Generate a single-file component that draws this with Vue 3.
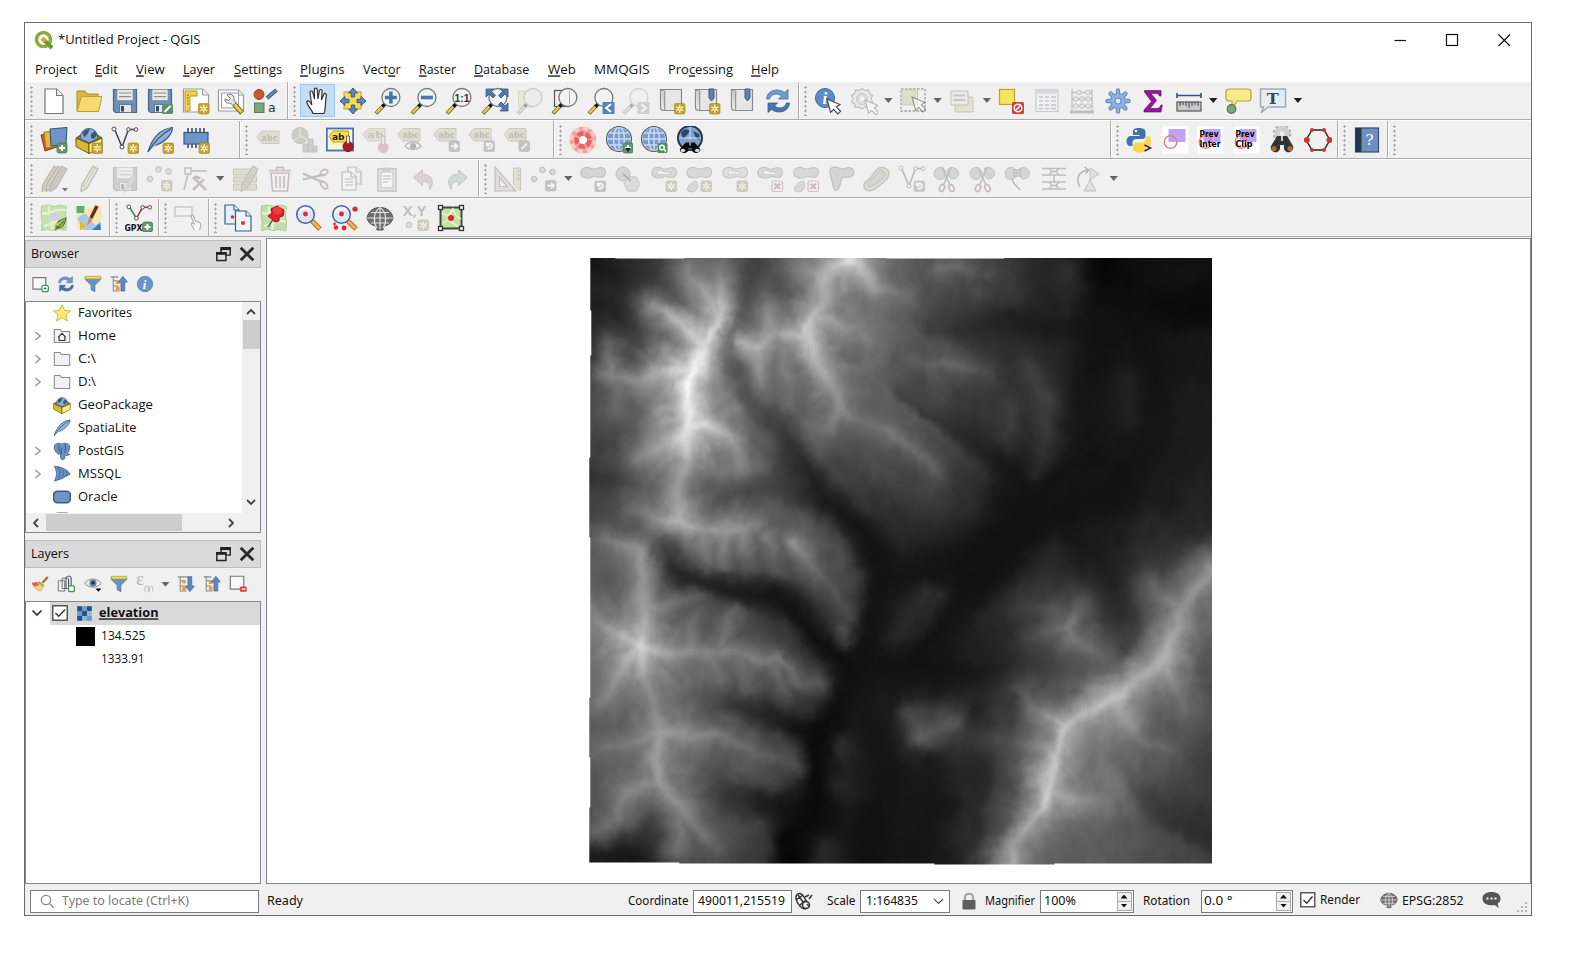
<script setup>
import { h, onMounted, ref } from 'vue'

/* Text run fitted to a fixed advance width. A "_" marks the mnemonic letter. */
const Txt = (p) => {
  const parts = p.t.split(/_(.)/)
  return h('svg', { width: p.w, height: 20, style: { display: 'block', overflow: 'visible', flex: 'none' } }, [
    h('text', {
      x: 0, y: 14.4, textLength: p.w, lengthAdjust: 'spacingAndGlyphs',
      'font-family': p.f || '"Open Sans", "Noto Sans", sans-serif', 'font-size': p.s || 13.2,
      'font-weight': p.b ? 700 : 400, fill: p.c || '#111', 'text-decoration': p.u ? 'underline' : null
    }, parts.map((s, i) => (i % 2 ? h('tspan', { 'text-decoration': 'underline' }, s) : s)))
  ])
}
Txt.props = ['t', 'w', 's', 'b', 'c', 'u', 'f']

const tahoma = '"Noto Sans", "Open Sans", sans-serif'

const menus = [
  ['Project', 42], ['_Edit', 22.7], ['_View', 28.7], ['_Layer', 32], ['_Settings', 48.2], ['_Plugins', 44.7],
  ['Vect_or', 37.5], ['_Raster', 37], ['_Database', 55.2], ['_Web', 27.8], ['MMQGIS', 55.5], ['Pro_cessing', 65], ['_Help', 28]
]

/* ---------- icon parts ---------- */
const star = (x = 16.5, y = 16.5) => `<rect x="${x}" y="${y}" width="10.5" height="10.5" rx="1.5" fill="#c4a12a" stroke="#a58418" stroke-width=".6"/><g transform="translate(${x + 5.25} ${y + 5.25})"><path d="M0-4V4M-3.6-2L3.6 2M-3.6 2L3.6-2" stroke="#fff8d8" stroke-width="1.4"/><circle r="1.3" fill="#c4a12a" stroke="#fff8d8"/></g>`
const plus = (x = 17, y = 17) => `<rect x="${x}" y="${y}" width="10" height="10" rx="2" fill="#5f9a68" stroke="#3f7048" stroke-width=".7"/><path d="M${x + 5} ${y + 2}v6M${x + 2} ${y + 5}h6" stroke="#fff" stroke-width="2"/>`
const grey = (x, y, g) => `<rect x="${x}" y="${y}" width="10.5" height="10.5" rx="1.5" fill="#8f9a9a" stroke="#7d8585" stroke-width=".6"/><path d="${g}" transform="translate(${x} ${y})" fill="none" stroke="#fff" stroke-width="1.7"/>`
const arrowG = 'M2 5.2h6M5.4 2.4l3 2.8-3 2.8'
const turnG = 'M3 3.4c4-2.6 6 1 4.2 3.2-1 1.2-2.6 1.2-3.6.4M2.6 1.6l.2 3h3'
const lens = (inner, handle = '#f0c63a', rim = '#73787a', fill = '#f1f2f2') => `<path d="M2 26.5l8.5-9" stroke="#55575a" stroke-width="4"/><path d="M2.4 25.900l6-6.300" stroke="${handle}" stroke-width="2.500"/><path d="M8.500 19.600l3-3.200" stroke="#111" stroke-width="3"/><circle cx="16.900" cy="10.500" r="9" fill="${fill}" stroke="${rim}" stroke-width="1.300"/>${inner}`
const sheet = (x, y, w, hh, c = 6, f = '#fff', s = '#8a8a8a') => `<path d="M${x} ${y}h${w - c}l${c} ${c}v${hh - c}h${-w}z" fill="${f}" stroke="${s}" stroke-width="1.2"/><path d="M${x + w - c} ${y}v${c}h${c}" fill="#eee" stroke="${s}" stroke-width="1.1"/>`
const floppy = `<path d="M2.5 2.5h23v23h-21l-2-2z" fill="#6d8fb8" stroke="#4d6580" stroke-width="1.2"/><rect x="6" y="2.5" width="16" height="11" fill="#e8e8e4" stroke="#8a9094" stroke-width=".7"/><path d="M8 6h12M8 9.6h12" stroke="#8c8c88" stroke-width="1.2"/><rect x="8.5" y="17.5" width="12" height="8" fill="#e6e6e6" stroke="#566a80" stroke-width=".8"/><rect x="10" y="19" width="3" height="5.5" fill="#34486a"/>`
const pencil = (t, f = '#cfc68a') => `<g transform="${t}"><path d="M18 1l5 3-11 19-6 3.4.8-6.8z" fill="${f}" stroke="#87826a" stroke-width="1.1"/><path d="M20.4 2.6L9.4 21M6.8 19.6l5 3" stroke="#a09a78" stroke-width="1" fill="none"/></g>`
const tag = (t, f = '#cfcbb0', s = '#a9a68e', c = '#8b8b80') => `<path d="M1 8.5l5-6h17v12.500H6z" fill="${f}" stroke="${s}" stroke-width="1"/><text x="5.6" y="12.2" font-family="DejaVu Sans, sans-serif" font-weight="700" font-size="9" textLength="16" lengthAdjust="spacingAndGlyphs" fill="${c}">${t}</text>`
const blob = (f = '#b9beb9') => `<path d="M2 9C1 3 7 1 12 3.400s8-2.400 12-.4 3 9-2 9.400c-4 .4-6-2-8-.5S3.400 14 2 9z" fill="${f}" stroke="#8e948e" stroke-width="1.1"/>`
const hole = `<path d="M7 8c0-3 4-3.400 6-1.600s5-1 6.500 1-2 2.800-5 2.200S7 11 7 8z" fill="#f0f0f0" stroke="#8e948e" stroke-width=".9"/>`
const globe = (f, s, x = 14, y = 13, r = 12) => `<g transform="translate(${x} ${y})"><circle r="${r}" fill="${f}" stroke="${s}" stroke-width="1.3"/><ellipse rx="${r * .45}" ry="${r}" fill="none" stroke="${s}" stroke-width="1.500"/><path d="M0 ${-r}V${r}M${-r} 0H${r}M${-r * .87} ${-r * .5}H${r * .87}M${-r * .87} ${r * .5}H${r * .87}" stroke="${s}" stroke-width="1.400"/><circle r="${r + .5}" fill="none" stroke="#555b66" stroke-width="1.100"/></g>`
const vnode = (c = '#3c4650') => `<path d="M3.500 3l7.500 18L17.500 3.500h7" fill="none" stroke="${c}" stroke-width="1.500"/><g fill="#fff" stroke="${c}"><circle cx="3" cy="3" r="2"/><circle cx="17.500" cy="3.500" r="1.800"/><circle cx="25" cy="3.500" r="1.800"/><circle cx="11" cy="21" r="2"/></g>`
const scissor = `<path d="M9 2l7.500 17M18 2l-7 17" stroke="#8a9090" stroke-width="1.600"/><ellipse cx="9" cy="23" rx="2.400" ry="3.600" transform="rotate(24 9 23)" fill="none" stroke="#a08888" stroke-width="1.700"/><ellipse cx="18.500" cy="23" rx="2.400" ry="3.600" transform="rotate(-24 18.500 23)" fill="none" stroke="#a08888" stroke-width="1.700"/>`
const twoBlob = `<circle cx="7" cy="8.500" r="6" fill="#b9beb9" stroke="#8e948e"/><path d="M15 4c4-3 10-1 10.500 4s-6 8-9 4-3-6-1.500-8z" fill="#b9beb9" stroke="#8e948e"/>`
const cur = (x, y) => `<path transform="translate(${x} ${y})" d="M0 0l3.600 13.500 3-3.200 4.200 4.600 2.800-2.600-4.300-4.400 3.700-2.400z" fill="#fff" stroke="#444" stroke-width="1.100"/>`
const scroll = `<path d="M2.500 2.500h21v21h-17.500c-3 0-3.500-1-3.500-3z" fill="#e6e6e6" stroke="#8a8a8a" stroke-width="1.200"/><path d="M2.500 4c3.500-2.500 5 0 4.200 3v16" fill="#d0d0d0" stroke="#8a8a8a"/>`
const mark = `<path d="M16 2h5v9l-2.500 3-2.500-3z" fill="#5d83b4" stroke="#3a5a85" stroke-width="1"/>`
const refresh = `<path d="M2.500 12C3 3 14 .5 20.500 5.500L24 2.500V12H14.500l3-3C13 5.500 7 7 5.500 12z" fill="#6c9bd2" stroke="#416da6" stroke-width=".8"/><path d="M25.500 16C25 25 14 27.500 7.500 22.500L4 25.500V16h9.500l-3 3c4.500 3.500 10.500 2 12-3z" fill="#4574b0" stroke="#345f92" stroke-width=".8"/>`
const prev = (b) => `<rect x=".5" y=".5" width="26" height="27" fill="#fff"/><rect x="6.500" y="3" width="17" height="13" fill="#bca2f8"/><circle cx="8.500" cy="16" r="6.300" fill="none" stroke="#f07b7b" stroke-width="1.500"/>${b ? `<text x="2.500" y="10.500" font-family="DejaVu Sans, sans-serif" font-size="9.500" font-weight="700" textLength="19" lengthAdjust="spacingAndGlyphs">Prev</text><text x="2.500" y="21" font-family="DejaVu Sans, sans-serif" font-size="9.500" font-weight="700" textLength="${b === 'Inter' ? 21 : 17}" lengthAdjust="spacingAndGlyphs">${b}</text>` : ''}`
const bino = (c = '#333', e = '#b06a28') => `<path d="M9 10h4v5h2v-5h4l6 10a4.500 4.500 0 1 1-9 3v-4h-4v4a4.500 4.500 0 1 1-9-3z" fill="${c}"/><circle cx="6" cy="22.500" r="2.600" fill="${e}"/><circle cx="22" cy="22.500" r="2.600" fill="${e}"/>`
const box = `<path d="M1 12l13 5.500v10l-13-7z" fill="#d9b92e" stroke="#6b5a1a"/><path d="M14 17.500l13-5.500v9l-13 6.500z" fill="#f9ea7c" stroke="#6b5a1a"/><path d="M1 12l6-4h14l6 4-13 5.500z" fill="#8a7428" stroke="#6b5a1a"/><path d="M5.500 13A8.700 8.700 0 1 1 22.500 13L14 16.500z" fill="#8daad0" stroke="#4a6080"/><path d="M7.500 7c2-3 5-4.500 7-3.500l-1.500 4-4 4zM16 8l4-3 2 4-3 4-3-1z" fill="#3a587c"/>`
const quill = (c = '#8fb2dc') => `<path d="M2 26C6 12 14 3 26.500 1.500c0 5-4.500 13-17 18" fill="${c}" stroke="#3c5a80" stroke-width="1.200"/><path d="M2 26C8 16 14 9 25 3" fill="none" stroke="#34506f" stroke-width="1.100"/>`
const eye = (x, y) => `<g transform="translate(${x} ${y})"><path d="M-8 0c4-5.500 12-5.500 16 0-4 4.500-12 4.500-16 0z" fill="#eee" stroke="#777" stroke-width="1.200"/><circle r="3" fill="#777"/></g>`
const thermo = (c) => `<path d="M19.500 10h3.500v7a5 5 0 1 1-3.500 0z" fill="${c}" stroke="${c}"/><path d="M20 11h2v7h-2z" fill="#fff" opacity=".7"/>`
const map = `<path d="M1.500 2l6-1 7 1.500 6-1.500 6 1.500-1 8 1 8-.5 8-6.500-1-6 1-6-1-6 1 .5-9-1-8z" fill="#bfe0a8" stroke="#9cc48a" stroke-width=".8"/><path d="M2 9c8 3 10-5 24-3M9 2c-2 9 6 14 3 24M26 18c-8-3-10 1-22 4" stroke="#e9f2cf" stroke-width="2.200" fill="none"/>`
const mg = (x) => `<path d="M17 17l8 8" stroke="#b8741e" stroke-width="5"/><path d="M17 17l7.500 7.500" stroke="#f2b45a" stroke-width="2.600"/><circle cx="10.500" cy="10.500" r="8.800" fill="#d8e8fb" stroke="#4a5fa0" stroke-width="1.500"/><path d="M4.500 9c1-5 7-6 10-3" stroke="#fff" stroke-width="1.600" fill="none"/><circle cx="10.500" cy="10" r="2.400" fill="#e22"/>${x}`
const dn = (x, y) => `<path d="M${x} ${y}h6l-3 4z" fill="#222"/>`

const I = {
  newdoc: sheet(5, 2, 18, 24.5, 6.5, '#fff', '#777'),
  open: `<path d="M2 23.500V4h8l2 3h11v4" fill="#d9b840" stroke="#b18f25" stroke-width="1"/><path d="M2 24.500l4.500-15H27l-3.500 15z" fill="#f6d970" stroke="#c19f33" stroke-width="1"/>`,
  save: floppy,
  saveas: floppy + `<rect x="16" y="17" width="11" height="10" rx="1.500" fill="#5b9167"/><path d="M18.500 25l6-6" stroke="#fff" stroke-width="2.200"/>`,
  layout: sheet(1.500, 2, 25, 23, 6, '#fff', '#999') + `<path d="M3 4h12v5H8v15H3z" fill="#f3d24e" stroke="#b8962c"/><path d="M5 8h2M5 11h2M5 14h2M5 17h2" stroke="#907010"/>` + star(),
  layouts: sheet(1.500, 3, 25, 21, 5, '#fff', '#999') + `<path d="M4.500 6h17v15h-17z" fill="#fafafa" stroke="#99b"/><path d="M17 17l8 9" stroke="#7a6420" stroke-width="5"/><path d="M17 17l7.500 8.300" stroke="#f0cf4a" stroke-width="3"/><path d="M10 8c4-2.500 8 1 7 5l2 3-3 2.500-2.500-2.500c-3 1-6-1-5.500-4l3.500 1.500 2-2z" fill="#e6e6e6" stroke="#777"/>`,
  style: `<circle cx="7" cy="7.500" r="5" fill="#c65a2e" stroke="#9d4420"/><path d="M15 11l9.500-8" stroke="#35557d" stroke-width="4"/><path d="M15 11l9.500-8" stroke="#6a90c2" stroke-width="2"/><rect x="2.500" y="16" width="9.500" height="9.500" fill="#7ba677" stroke="#54804f"/><text x="16" y="25" font-family="DejaVu Sans, sans-serif" font-size="12.500" fill="#333">a</text>`,
  hand: `<path d="M10 26.500c-1-4-4.500-6-6-10.500-.8-2.500 1.800-3 3-.8L8.800 18 7 6c-.3-2.500 2.400-2.700 2.900-.4L11.500 12 11.300 3c0-2.400 2.700-2.400 3 0l.7 9 1.300-8c.4-2.200 2.900-1.800 2.800.4L18.500 13l2.200-5.500c.9-1.800 3-1 2.700 1C22 15 23 22 21 26.500z" fill="#fff" stroke="#333" stroke-width="1.200"/>`,
  pan: `<rect x="5" y="5" width="17" height="17" fill="#f5dc52" stroke="#c0a32c"/><path d="M14 1l4.500 5h-2.800v4h-3.400V6H9.500zM14 27l4.500-5h-2.800v-4h-3.400v4H9.500zM1 14l5-4.500v2.800h4v3.400H6v2.800zM27 14l-5-4.500v2.800h-4v3.400h4v2.800z" fill="#5c87bd" stroke="#35557d" stroke-width=".9"/>`,
  zin: lens('<path d="M16.900 4.500v12M10.900 10.500h12" stroke="#4775ae" stroke-width="3.600"/>'),
  zout: lens('<path d="M10.900 10.500h12" stroke="#4775ae" stroke-width="3.600"/>'),
  z11: lens('<text x="9.500" y="14.700" font-family="Liberation Sans, sans-serif" font-weight="700" font-size="11" textLength="15" lengthAdjust="spacingAndGlyphs" fill="#333">1:1</text>'),
  full: lens('<path d="M5 2h8l-2.500 2.500 4 4-2.500 2.500-4-4L5 10zM27 2h-8l2.500 2.500-4 4 2.500 2.500 4-4L27 10zM27 24h-8l2.500-2.500-4-4 2.500-2.500 4 4L27 16z" fill="#4f7ab0" stroke="#35557d" stroke-width=".8"/>'),
  zsel: `<g opacity=".35"><rect x="2.500" y="4" width="16" height="16" fill="#e0dc9a" stroke="#aaa"/>${lens('', '#bbb', '#888', '#e6e6dc')}</g>`,
  zlay: `<rect x="3.500" y="3.500" width="15" height="16" fill="#eee" stroke="#555" stroke-width="1.200"/>` + lens('<path d="M18.500 4v13" stroke="#aaa"/>'),
  zlast: lens('') + `<rect x="15.500" y="15" width="12" height="12" fill="#5583bc"/><path d="M24 17l-4.800 4 4.800 4" fill="none" stroke="#fff" stroke-width="2"/>`,
  znext: `<g opacity=".3">${lens('', '#bbb', '#888')}<rect x="15.500" y="15" width="12" height="12" fill="#888"/><path d="M19 17l4.800 4-4.800 4" fill="none" stroke="#fff" stroke-width="2"/></g>`,
  nview: scroll + star(),
  n3d: scroll + mark + star(),
  book: scroll + mark,
  refresh,
  ident: `<circle cx="11" cy="11" r="9.500" fill="#5f8cc6" stroke="#3b659e"/><text x="8.500" y="17" font-family="Liberation Serif, serif" font-style="italic" font-weight="700" font-size="17" fill="#fff">i</text>` + cur(13, 12),
  action: `<g opacity=".35"><path d="M12 1.500l3 2 3.500-.5 1 3.500 3 2-1.500 3.500 1.500 3-3 2-1 3.500-3.500-.5-3 2-3-2-3.500.5-1-3.500-3-2 1.500-3-1.500-3.500 3-2 1-3.500 3.500.5z" fill="#ddd" stroke="#666" stroke-width="1.200"/><circle cx="12" cy="12" r="5.500" fill="#bbb" stroke="#777"/><path d="M10.500 9l5 3-5 3z" fill="#fff"/>${cur(15, 13)}</g>`,
  select: `<g opacity=".5"><rect x="2" y="2" width="24" height="22" fill="none" stroke="#555" stroke-width="1.300" stroke-dasharray="2.500 1.500"/><rect x="3" y="3" width="15.500" height="15" fill="#cfcbae" stroke="#aaa88e"/></g><g opacity=".5">${cur(13, 10)}</g>`,
  form: `<g opacity=".45"><path d="M7 10h18v15H7z" fill="#d2cdac" stroke="#999578"/><path d="M3 4h17v14H3z" fill="#e4e4e2" stroke="#888"/><path d="M5.500 8.500h12M5.500 13h12" stroke="#999" stroke-width="1.800"/></g>`,
  desel: `<rect x="2.500" y="2.500" width="15" height="15" fill="#f7e35c" stroke="#bfa22c" stroke-width="1.200"/><rect x="15" y="15" width="12" height="12" rx="1.500" fill="#d43c3c"/><circle cx="21" cy="21" r="3.800" fill="none" stroke="#fff" stroke-width="1.500"/><path d="M18.500 23.500l5-5" stroke="#fff" stroke-width="1.500"/>`,
  table: `<g opacity=".3"><rect x="3" y="2.500" width="22" height="22" fill="#f3f3f3" stroke="#778" stroke-width="1.200"/><path d="M3 4.500h22" stroke="#9ab" stroke-width="4"/><path d="M6 10h4M12 10h4M18 10h5M6 14h4M12 14h4M18 14h5M6 18h4M12 18h4M18 18h5M6 21.500h4M12 21.500h4M18 21.500h5" stroke="#667" stroke-width="1.300"/></g>`,
  abacus: `<g opacity=".4" fill="none" stroke="#777"><path d="M4 2v22M24 2v22M4 5.500h20M4 12h20M4 19h20" stroke-width="1.300"/><path d="M2 25h24" stroke-width="3"/><g fill="#ddd"><circle cx="11" cy="5.500" r="2.300"/><circle cx="20" cy="5.500" r="2.300"/><circle cx="8" cy="12" r="2.300"/><circle cx="14" cy="12" r="2.300"/><circle cx="20" cy="12" r="2.300"/><circle cx="8" cy="19" r="2.300"/><circle cx="14" cy="19" r="2.300"/><circle cx="20" cy="19" r="2.300"/></g></g>`,
  gear: `<g stroke="#5d8ac6" stroke-width="4.400" stroke-linecap="round"><path d="M14 3.500v21M3.500 14h21M6.600 6.600l14.800 14.800M6.600 21.400L21.400 6.600"/></g><circle cx="14" cy="14" r="7.600" fill="#8fb0de" stroke="#5d8ac6"/><g stroke="#8fb0de" stroke-width="2.400" stroke-linecap="round"><path d="M14 3.500v5M14 19.500v5M3.500 14h5M19.500 14h5M6.600 6.600l3 3M18.400 18.400l3 3M6.600 21.400l3-3M18.400 9.600l3-3"/></g><circle cx="14" cy="14" r="3" fill="#dfe8f5" stroke="#5d8ac6"/>`,
  sigma: `<path d="M5.500 3.500h16.500v5.500h-1.500c-.6-2-1.500-2.500-4-2.500H12l5.500 7L11 21.500h6.500c2.500 0 3.500-1 4.500-3.500h1.300L22 25H5v-2l7.500-8.500L5.500 5z" fill="#93189b" stroke="#6c0f74" stroke-width=".7"/>`,
  ruler: `<path d="M2 8.500h24M2 6v5M26 6v5" stroke="#35587c" stroke-width="1.700"/><rect x="2" y="15" width="24" height="9" fill="#c8cacb" stroke="#555" stroke-width="1.200"/><path d="M5 15v4M8 15v3M11 15v4M14 15v6M17 15v4M20 15v3M23 15v4" stroke="#444"/>`,
  tip: `<path d="M5 2h19q3 0 3 3v6q0 3-3 3H13l-5 8v-8H5q-3 0-3-3V5q0-3 3-3z" fill="#f8eb87" stroke="#b9a040" stroke-width="1.200"/><circle cx="7.500" cy="22" r="4.300" fill="#7fa477" stroke="#4c7746" stroke-width="1.200"/>`,
  annot: `<path d="M1.500 2h25v18H9l-7 6 2.500-6h-3z" fill="#e5eef5" stroke="#a3aab0" stroke-width="1.500"/><text x="7.800" y="16.500" font-family="DejaVu Serif, serif" font-weight="700" font-size="15" textLength="12" lengthAdjust="spacingAndGlyphs" fill="#444">T</text>`,
  ds: `<path d="M1 9l12-3 4 15-12 4z" fill="#cf5b28" stroke="#8f3b16"/><path d="M4 6l13-1 2 15-13 2z" fill="#e8b63a" stroke="#a67d1c"/><path d="M10 3l17-1.500-1 16.500-15 2z" fill="#6e95c6" stroke="#34506f"/>` + plus(),
  gpkg: box + star(17, 17), vnew: vnode() + star(17, 17), spat: quill() + star(17, 17),
  mem: `<path d="M6 2v20M10 2v20M14 2v20M18 2v20M22 2v20" stroke="#34506f" stroke-width="1.600"/><rect x="2" y="6.500" width="24" height="11.500" fill="#6e95c6" stroke="#3c5a80" stroke-width="1.200"/>` + star(17, 17),
  abc: `<g opacity=".5" transform="translate(1 2.500)">${tag('abc')}</g>`,
  pie: `<g opacity=".5"><circle cx="9" cy="9.500" r="8" fill="#a9aa96" stroke="#8e948e"/><path d="M9 1.500v8l7 4M9 9.500L3 15" stroke="#eee" fill="none"/><path d="M12 18h5v8h-5zM17 13h5v13h-5zM22 20h4v6h-4z" fill="#b5aaaa" stroke="#999"/></g>`,
  abs: `<rect x=".8" y="2.500" width="26.400" height="22" fill="#fdf6cf" stroke="#3c73c8" stroke-width="1.800"/><path d="M3 10.500l4-5.500h15.500v11H7z" fill="#f8e04c" stroke="#b59b28"/><text x="6" y="14" font-family="DejaVu Sans, sans-serif" font-weight="700" font-size="9" fill="#222">ab</text><circle cx="22" cy="20.500" r="5" fill="#a81d22" stroke="#7d1014"/><path d="M20.500 10h3v7.500h-3z" fill="#f4f4f4" stroke="#9a2a2a" stroke-width=".8"/>`,
  abt: `<g opacity=".42">${tag('ab')}${thermo('#b08a8a')}</g>`,
  abe: `<g opacity=".5">${tag('abc')}${eye(16, 20)}</g>`,
  aba: `<g opacity=".5">${tag('abc')}${grey(16, 15, arrowG)}</g>`,
  abr: `<g opacity=".5">${tag('abc')}${grey(16, 15, turnG)}</g>`,
  abp: `<g opacity=".5">${tag('abc')}${grey(16, 15, 'M2.500 8l5.500-5.500')}</g>`,
  ring: `<circle cx="14" cy="14" r="8.600" fill="none" stroke="#f3a0a0" stroke-width="9.400"/><circle cx="14" cy="14" r="6.400" fill="none" stroke="#e86060" stroke-width="4.500" stroke-dasharray="6 2"/><circle cx="14" cy="14" r="11.500" fill="none" stroke="#f9cccc" stroke-width="3.500" stroke-dasharray="5 4"/><circle cx="14" cy="14" r="3.800" fill="#fff"/>`,
  wadd: globe('#6f9be0', '#d5d9de') + plus(18, 17) + dn(20, 22),
  wsea: globe('#6f9be0', '#d5d9de') + `<rect x="17.500" y="17" width="10" height="10" rx="1.500" fill="#4f9158"/><circle cx="22" cy="21.500" r="2.300" fill="none" stroke="#fff" stroke-width="1.400"/><path d="M24 23.500l2 2" stroke="#fff" stroke-width="1.400"/>`,
  wbin: `<circle cx="14" cy="12" r="12" fill="#7ea3cc" stroke="#26364a" stroke-width="2"/><path d="M5 7c3-5 7-4 9-2l-4 5-3 3zM17 5l6 3 1 6-4-2z" fill="#2c4764"/><path d="M3 12h22M14 1v12" stroke="#dfefff" stroke-width=".9"/><g transform="translate(1.500 10) scale(.9 .64)">${bino('#0a0a0a', '#ddd')}</g>`,
  py: `<path d="M13 2c-6 0-6 2.500-6 4v3h6.500v1H4.500C2 10 .5 13 .5 15s1 5 3.500 5h2.500v-3.500c0-2.500 2-3.500 4-3.500h6c2 0 3-1.500 3-3V6c0-3-3-4-6.500-4z" fill="#3c74a8"/><path d="M19.500 10v3c0 2-1.500 3.500-3.500 3.500h-6c-2 0-3 1.500-3 3V23c0 2 3 3.500 6.500 3.500S20 25 20 22.500V20h4c1.500-2 1.500-8-1-10z" fill="#fbd64e"/><circle cx="10" cy="5" r="1.200" fill="#fff"/><path d="M18.500 19l6 3-6 3" fill="none" stroke="#333" stroke-width="1.600"/>`,
  p0: prev(''), p1: prev('Inter'), p2: prev('Clip'),
  bino: `<circle cx="14" cy="7.500" r="5" fill="none" stroke="#cfcfcf" stroke-width="5"/><circle cx="14" cy="7.500" r="8.300" fill="none" stroke="#b5b5b5" stroke-width="2" stroke-dasharray="3 2.300"/>` + bino(),
  hex: `<path d="M8 4h12l6 10-6 10H8L2 14z" fill="none" stroke="#222" stroke-width="1.400"/><g fill="#dc2f28"><circle cx="8" cy="4" r="2"/><circle cx="20" cy="4" r="2"/><circle cx="25.500" cy="14" r="3"/><circle cx="20" cy="24" r="2"/><circle cx="8" cy="24" r="2"/><circle cx="2.800" cy="14" r="3"/></g>`,
  help: `<rect x="2.500" y="2" width="23" height="24" fill="#6d90c0" stroke="#3a4f6a" stroke-width="1.200"/><rect x="2.500" y="2" width="6" height="24" fill="#26364a"/><text x="12.500" y="19" font-family="DejaVu Serif, serif" font-size="15" fill="#fff">?</text>`,
  pens: `<g opacity=".5">${pencil('translate(-4 0)', '#b9b0a8')}${pencil('translate(0 0)', '#b9b0a8')}${pencil('translate(4 0)', '#b4a49c')}</g><path d="M22 23h6l-3 3.500z" fill="#777"/>`,
  pen: `<g opacity=".5">${pencil('translate(0 0)', '#dcdad0')}</g>`,
  savee: `<g opacity=".32" style="filter:saturate(.15)">${floppy}${pencil('translate(9 9) scale(.7)', '#b8a8a0')}</g>`,
  pts: `<g opacity=".45"><g fill="#c2c6c2" stroke="#888"><circle cx="4" cy="14" r="2.800"/><circle cx="12.500" cy="4.500" r="2.800"/><circle cx="22.500" cy="6.500" r="2.800"/></g><g style="filter:saturate(.25)">${star(15.500, 15.500)}</g></g>`,
  vert: `<g opacity=".4" fill="none" stroke="#777" stroke-width="1.500"><path d="M3 3h6v6H3zM9 6h16M6 9L2 25"/><path d="M11 25l11-11M13 14l11 11" stroke="#8a7a70" stroke-width="2.600"/><path d="M11 14c2-3 6-2 7 0" stroke-width="3"/></g>`,
  attr: `<g opacity=".42"><path d="M2.500 4h23v6h-23zM2.500 12h23v5h-23zM2.500 19h23v6h-23z" fill="#c5c4a4" stroke="#8d8c70"/>${pencil('translate(4 0)', '#aaa')}</g>`,
  trash: `<g opacity=".45" fill="none" stroke="#9a7d7d" stroke-width="1.600"><path d="M5 8h18l-1.500 18h-15zM3 5.500h22M10.500 5V2.500h7V5M10 11v12M14 11v12M18 11v12"/></g>`,
  cut: `<g opacity=".5" fill="none"><path d="M1 8.500l20 9M1 14.500l21-5" stroke="#8a9090" stroke-width="2"/><ellipse cx="22" cy="7.500" rx="4" ry="2.500" transform="rotate(-30 22 7.500)" stroke="#a08888" stroke-width="1.700"/><ellipse cx="22" cy="20" rx="4.500" ry="2.500" transform="rotate(50 22 20)" stroke="#a08888" stroke-width="1.700"/></g>`,
  copy: `<g opacity=".5">${sheet(11, 2, 13, 17, 5, '#eee')}${sheet(5, 7, 14, 18, 5, '#f5f5f5')}<path d="M8 14h8M8 17h8M8 20h8" stroke="#888"/></g>`,
  paste: `<g opacity=".5"><path d="M5 4h18v22H5z" fill="#ddd" stroke="#999" stroke-width="1.500"/><path d="M8 7h12v16H8z" fill="#f8f8f8" stroke="#999"/><path d="M10 2.500h8v4h-8z" fill="#aaa"/><path d="M10 11h8M10 14h8M10 17h5" stroke="#888"/></g>`,
  undo: `<path opacity=".5" d="M5.500 12.500L14.500 5v4.500c9-.5 13 7 7 15 .5-6-2-8.500-7-8v4z" fill="#c9b5b0" stroke="#a5918c"/>`,
  redo: `<path opacity=".5" d="M24.500 12.500L15.500 5v4.500c-9-.5-13 7-7 15-.5-6 2-8.500 7-8v4z" fill="#b9c2bb" stroke="#8f9a92"/>`,
  adv: `<g opacity=".45"><path d="M1 2l21 24H1zM5.500 12.500v9h8z" fill="#d9c8c4" fill-rule="evenodd" stroke="#8d7f7c" stroke-width="1.200"/><path d="M19.500 3h7v23l-7-7z" fill="#d2cdac" stroke="#999578"/><path d="M23 6h3M23 10h3M23 14h3" stroke="#888"/></g>`,
  mv: `<g opacity=".5"><g fill="#c2c6c2" stroke="#888"><circle cx="4" cy="14" r="2.800"/><circle cx="12.500" cy="5" r="2.800"/><circle cx="22.500" cy="7" r="2.800"/></g>${grey(15.500, 15.500, arrowG)}</g>`,
  g1: `<g opacity=".5">${blob()}${grey(16, 16, turnG)}</g>`,
  g2: `<g opacity=".5"><circle cx="9" cy="9" r="7" fill="#b9beb9" stroke="#8e948e"/><path d="M14 12h8l4 7-4 7h-8l-4-7z" fill="#c8cec8" stroke="#8e948e"/><path d="M9 9l8 7" stroke="#666" stroke-width="1.400"/></g>`,
  g3: `<g opacity=".45">${blob()}${hole}<g style="filter:saturate(.25)">${star(16, 16)}</g></g>`,
  g4: `<g opacity=".45">${blob()}<path d="M3 26c-2-4 3-9 8-10 3 2 2 10-3 11z" fill="#b9beb9" stroke="#8e948e"/><g style="filter:saturate(.25)">${star(16, 16)}</g></g>`,
  g5: `<g opacity=".45">${blob('#ccd0cc')}${hole}<g style="filter:saturate(.25)">${star(16, 16)}</g></g>`,
  g6: `<g opacity=".45">${blob()}${hole}<rect x="16" y="16" width="10.500" height="10.500" rx="1.500" fill="#eee" stroke="#b08a8a" stroke-width="1.200"/><path d="M18.500 18.500l5.500 5.500M24 18.500L18.500 24" stroke="#a08080" stroke-width="2"/></g>`,
  g7: `<g opacity=".45">${blob()}<path d="M3 26c-2-4 3-9 8-10 3 2 2 10-3 11z" fill="#b9beb9" stroke="#8e948e"/><rect x="16" y="16" width="10.500" height="10.500" rx="1.500" fill="#eee" stroke="#b08a8a" stroke-width="1.200"/><path d="M18.500 18.500l5.500 5.500M24 18.500L18.500 24" stroke="#a08080" stroke-width="2"/></g>`,
  g8: `<path opacity=".5" d="M3 7c-1-5 6-6 10-3.500s7-2.500 11-.5 4 8-1 9c-4 .8-6-1-8 1s-1 10-5 12-4-6-5-9-2-6-2-9z" fill="#b9beb9" stroke="#8e948e" stroke-width="1.200"/>`,
  g9: `<g opacity=".5"><path d="M3 24c-4-6 3-8 6-12s7-12 14-9 3 11-1 14-14 13-19 7z" fill="#d0ccb8" stroke="#99967c" stroke-width="1.300"/><path d="M6 21c-2-4 3-5 6-9s5-8 9-6 2 6-1 8-11 10-14 7z" fill="#b9beb9" stroke="#8e948e"/></g>`,
  g10: `<g opacity=".45">${vnode('#777')}${grey(16, 16, turnG)}</g>`,
  g11: `<g opacity=".5">${twoBlob}${scissor}</g>`,
  g12: `<g opacity=".5">${twoBlob}${scissor}<path d="M12.500 3l2 4" stroke="#f0f0f0" stroke-width="2"/></g>`,
  g13: `<g opacity=".5">${twoBlob}<path d="M9 5h9M9 8h9M9 11h9" stroke="#777"/><path d="M8 14c1 6 5 6 8 11" fill="none" stroke="#777" stroke-width="1.300"/></g>`,
  g14: `<g opacity=".42" stroke="#777" stroke-width="1.500"><path d="M2 3.500h24M2 10h24M2 17h24M2 24h24M9 10l3-3.500-3-3M19 10l-3-3.500 3-3M9 24l3-3.500-3-3.500M19 24l-3-3.500 3-3.500M12 6.500h4M12 20.500h4M14 10v7" fill="none"/></g>`,
  g15: `<g opacity=".45"><path d="M5 22C0 14 4 6 13 5M9.500 2l4 3-3 3.500" fill="none" stroke="#666" stroke-width="1.400"/><path d="M15 3l9 6-9 6zM15 15l6 11H9z" fill="#ccc" stroke="#888"/></g>`,
  m1: `<g opacity=".85">${map}<circle cx="13" cy="13" r="4" fill="#c5ccea"/></g><path d="M16 23c0-5 4-7 10-9-1 6-3 10-8 10zM15 26l9-9" fill="#b5c98a" stroke="#4a7a2e" stroke-width="1.300"/><circle cx="17" cy="20" r="1.400" fill="#e5c23c"/><circle cx="23" cy="24" r="1.400" fill="#e5c23c"/>`,
  m2: `<path d="M1.500 2h8v7h-8z" fill="#59b268"/><path d="M1.500 9h8V4l17-1v10l-2 13H3z" fill="#f3e7b4"/><path d="M2 14l8-5 10 12 6-3v8H8z" fill="#a9c9e8"/><path d="M5 17l6 5-6 4z" fill="#e9b82a"/><path d="M22 2L16 14" stroke="#6a2c12" stroke-width="3.500"/><path d="M14.500 13l-3 9 6-6z" fill="#d98a3a"/><path d="M17 26l8-7 1 7z" fill="#3c7ad0"/>`,
  gpx: `<g transform="translate(1 0) scale(.95)"><path d="M3.500 3L11 15" stroke="#3b8e44" stroke-width="1.700"/><path d="M11 15l6.500-11.500h7" fill="none" stroke="#b0303c" stroke-width="1.600"/><g fill="#fff" stroke="#444"><circle cx="3" cy="3" r="2"/><circle cx="17.500" cy="3.500" r="1.900"/><circle cx="25" cy="3.500" r="1.900"/><circle cx="11" cy="15" r="2"/></g></g><text x="-.5" y="26.500" font-family="DejaVu Sans, sans-serif" font-weight="700" font-size="9" textLength="18" lengthAdjust="spacingAndGlyphs" fill="#111">GPX</text>` + plus(17.500, 18),
  tap: `<g opacity=".55"><rect x="1" y="3" width="17" height="9" fill="#f6f6f6" stroke="#999" stroke-width="1.200"/><path d="M20 26c-1-4-4-5-2-7l2 1-3-8c0-1.500 2-1.500 2.500 0l2 5 4 1.500c2 1 1.500 4 0 7.500" fill="#fff" stroke="#777" stroke-width="1.100"/></g>`,
  q1: `${sheet(1, 1, 14, 19, 5, '#e2eefa', '#2f6089')}${sheet(11.500, 7, 15.500, 20, 5, '#eef5fc', '#2f6089')}<circle cx="8.500" cy="13" r="1.800" fill="#e22"/><circle cx="19" cy="19" r="2" fill="#e22"/>`,
  q2: map + `<path d="M8 23l6-9" stroke="#666" stroke-width="1.500"/><path d="M8 12l4-3-1-4 6-3 7 4-1 6-4 1v4l-4 1z" fill="#e8202a" stroke="#9c1016" stroke-linejoin="round"/><ellipse cx="17.500" cy="6.500" rx="5" ry="3.800" fill="#f43a3a"/>`,
  q3: mg(''),
  q4: mg('<circle cx="24" cy="5" r="2.600" fill="#e22"/><circle cx="5" cy="23.500" r="2.200" fill="#e22"/><circle cx="13" cy="24" r="2.400" fill="#e22"/><circle cx="3.500" cy="20" r="1.400" fill="#e22"/>'),
  q5: `<path d="M1 14C2 7 8 3.500 14 3.500S26 7 27 14c-2 6-5 7-9 8l-1 4h-6l-1-4C6 21 3 20 1 14z" fill="#6e6e6e" stroke="#4a4a4a"/><path d="M1 14h26M5 8.500h18M5 19h18M14 3.500v22M14 3.500c-7 5-7 14-3 21M14 3.500c7 5 7 14 3 21" fill="none" stroke="#e2e2e2" stroke-width="1.200"/>`,
  q6: `<g opacity=".45"><text x="1" y="12" font-family="Open Sans, sans-serif" font-weight="700" font-size="14" textLength="23" lengthAdjust="spacingAndGlyphs" fill="#888">X,Y</text><circle cx="7" cy="21" r="2.800" fill="#c2c6c2" stroke="#888"/><g style="filter:saturate(.25)">${star(16, 16)}</g></g>`,
  q7: `<rect x="3.500" y="3.500" width="21" height="21" fill="#c0e3a4" stroke="#444" stroke-width="2"/><path d="M5 9l6 3 5-7 3 7 5 3M6 19l6-3 8 6" stroke="#e8f5c8" stroke-width="1.800" fill="none"/><g fill="#fff" stroke="#333" stroke-width="1.300"><rect x="1.500" y="1.500" width="4" height="4"/><rect x="22.500" y="1.500" width="4" height="4"/><rect x="1.500" y="22.500" width="4" height="4"/><rect x="22.500" y="22.500" width="4" height="4"/></g><circle cx="14" cy="14" r="3" fill="#e22"/>`,
  /* panel icons */
  addl: `<path d="M3 4h20v18H3z" fill="#f8f8f8" stroke="#777" stroke-width="1.800"/><rect x="17" y="16" width="10" height="10" rx="3" fill="#fff" stroke="#4f8a58" stroke-width="2"/><path d="M22 18.500v5M19.500 21h5" stroke="#4f8a58" stroke-width="1.500"/>`,
  filter: `<path d="M2 3h24v4L17 16v10l-6-3v-7L2 7z" fill="#6a93c5" stroke="#4a6a94" stroke-width="1"/><path d="M2 2h24v4H2z" fill="#f3e14e" stroke="#b5a030"/>`,
  coll: `<path d="M5 3v22h10M5 9h8M5 17h8" fill="none" stroke="#888" stroke-width="1.600"/><path d="M1 3h12" stroke="#888" stroke-width="2"/><rect x="9" y="9" width="6" height="5" fill="#f29b3c"/><rect x="9" y="18" width="6" height="6" fill="#f29b3c"/><path d="M20 2l7 9h-4v14h-6V11h-4z" fill="#5a88c0" stroke="#3a5f92"/>`,
  expa: `<path d="M5 3v22h10M5 9h8M5 17h8" fill="none" stroke="#888" stroke-width="1.600"/><path d="M1 3h22" stroke="#888" stroke-width="2"/><rect x="8" y="8" width="6" height="5" fill="#f29b3c"/><rect x="8" y="18" width="6" height="6" fill="#f29b3c"/><path d="M20 26l7-9h-4V3h-6v14h-4z" fill="#5a88c0" stroke="#3a5f92"/>`,
  info: `<circle cx="14" cy="14" r="12" fill="#6b94cb" stroke="#4a74ad"/><text x="10.500" y="21" font-family="Liberation Serif, serif" font-style="italic" font-weight="700" font-size="20" fill="#fff">i</text>`,
  fav: `<path d="M14 1l4 9 9.500.7-7.400 6.200 2.500 9.600L14 21.300l-8.600 5.200 2.500-9.600L.5 10.700 10 10z" fill="#fbec74" stroke="#c9ab35" stroke-width="1.300"/>`,
  home: `<path d="M2 24V4h9l2 3h13v17z" fill="#f1f1f1" stroke="#888" stroke-width="1.700"/><path d="M8 16l6-6 6 6M9.500 15v6h9v-6" fill="none" stroke="#333" stroke-width="1.800"/>`,
  dir: `<path d="M2 24V4h9l2 3h13v17z" fill="#f1f1f1" stroke="#8c8c8c" stroke-width="1.700"/>`,
  gp: box, sl: quill(),
  pg: `<path d="M3 4c3-3 8-2 10-1 4-2 11-2 13 3 1 5-2 11-4 12 1 1 3 0 4 1-2 3-6 2-7 1l-1 6c-1 2-6 2-6-1l-.5-7c-2 2-5 1-5-1C3 16 .5 8 3 4z" fill="#6a93c5" stroke="#3f5f8a" stroke-width="1.200"/><path d="M10 4c-2 5-1 8 1 12M18 3c3 5 1 9 0 14M13 9v10" fill="none" stroke="#34506f" stroke-width="1.300"/>`,
  ms: `<path d="M2 2c10 0 20 5 25 12L12 22 2 25c5-8 4-16 0-23z" fill="#6a93c5" stroke="#3f5f8a" stroke-width="1.200"/><path d="M8 3c4 7 4 13 0 20M14 5c3 6 3 10 0 16M20 9c2 3 2 6 0 9" fill="none" stroke="#3f5f8a" stroke-width="1.300"/>`,
  ora: `<rect x="1" y="5" width="26" height="18" rx="6" fill="#6f95c8" stroke="#3f5c85" stroke-width="2.500"/>`,
  brush: `<path d="M26 3l-8 9" stroke="#a9692c" stroke-width="3.500"/><path d="M3 14l9-3 8 5-5 9C10 24 5 20 3 14z" fill="#f3d36a" stroke="#b99a3a"/><path d="M1 12l8-1 4 5-9 2z" fill="#e8604c"/><path d="M12 11l8 6" stroke="#b97" stroke-width="3"/>`,
  grp: `<path d="M2 9h10v16H2zM8 5h10v16H8z" fill="#eee" stroke="#777" stroke-width="1.500"/><path d="M14 22V4q4-5 8 0v14q-2 3-4 0V7" fill="none" stroke="#456" stroke-width="1.700"/><rect x="18" y="17" width="9" height="9" rx="2" fill="#fff" stroke="#4f8a58" stroke-width="2"/>`,
  eye: `<path d="M1 13C7 4 20 4 27 13 20 21 8 21 1 13z" fill="#e8eaf0" stroke="#888" stroke-width="1.500"/><circle cx="14" cy="12.500" r="5.500" fill="#5a7ea8"/><circle cx="14" cy="12.500" r="2.300" fill="#223"/><path d="M18 21h9l-4.500 5z" fill="#000"/>`,
  eps: `<g opacity=".4"><text x="0" y="16" font-family="Liberation Serif, serif" font-size="29" fill="#555">ε</text><path d="M14 27v-8q4-4 5 0v8M21 27v-8q4-4 5 0v8" fill="none" stroke="#888" stroke-width="1.700"/></g>`,
  rem: `<path d="M2 2h21v20H2z" fill="#f8f8f8" stroke="#777" stroke-width="1.800"/><rect x="17" y="18" width="10.500" height="8" rx="2" fill="#e23b35"/><path d="M19.500 22h6" stroke="#fff" stroke-width="2"/>`,
  ras: `<path d="M2 2h24v24H2z" fill="#8fb4de"/><path d="M2 2h8v8H2zM18 2h8v8h-8zM10 10h8v8h-8zM2 18h8v8H2z" fill="#27527c"/><path d="M10 2h8v8h-8zM2 10h8v8H2zM18 18h8v8h-8z" fill="#6d9bcd"/>`,
  float: `<path d="M10 3h15v12H10z" fill="#ddd" stroke="#222" stroke-width="2.400"/><path d="M9 4.500h17" stroke="#222" stroke-width="4.500"/><path d="M3 11h15v13H3z" fill="#ddd" stroke="#222" stroke-width="2.400"/><path d="M2 12.500h17" stroke="#222" stroke-width="4"/>`,
  close: `<path d="M3 3l22 22M25 3L3 25" stroke="#2b2b2b" stroke-width="5"/>`
}

const range = (s) => s.split(' ')
const bars = [
  [
    { w: 263, t: range('newdoc open save saveas layout layouts style') },
    { w: 511, t: range('hand pan zin zout z11 full zsel zlay zlast znext nview n3d book refresh') },
    { w: 0, t: range('ident action ^ select ^ form ^ desel table abacus gear sigma ruler ^ tip annot ^') }
  ],
  [
    { w: 215, t: range('ds gpkg vnew spat mem') },
    { w: 314, t: range('abc pie abs abt abe aba abr abp') },
    { w: 557, t: range('ring wadd wsea wbin') },
    { w: 227, t: range('py p0 p1 p2 bino hex') },
    { w: 50, t: range('help') },
    { w: 0, t: [] }
  ],
  [
    { w: 454, t: range('pens pen savee pts vert ^ attr trash cut copy paste undo redo') },
    { w: 0, t: range('adv mv ^ g1 g2 g3 g4 g5 g6 g7 g8 g9 g10 g11 g12 g13 g14 g15 ^') }
  ],
  [
    { w: 85, t: range('m1 m2') }, { w: 49, t: range('gpx') }, { w: 50, t: range('tap') },
    { w: 0, t: range('q1 q2 q3 q4 q5 q6 q7') }
  ]
]
const dark = new Set(['ruler', 'annot'])

const browserRows = [
  ['fav', 'Favorites', 54, 0], ['home', 'Home', 38, 1], ['dir', 'C:\\', 18, 1], ['dir', 'D:\\', 18, 1],
  ['gp', 'GeoPackage', 75, 0], ['sl', 'SpatiaLite', 58.5, 0], ['pg', 'PostGIS', 46, 1], ['ms', 'MSSQL', 43, 1], ['ora', 'Oracle', 39.5, 0], ['ora', '', 1, 0]
]

/* ---------- elevation raster ---------- */
/* Polylines of x, y, value on a 1525 × 1510 survey grid (origin 24, 27). */
const ridges = [
  [340,60,120,345,110,160,348,150,190,340,200,205,310,240,220,280,300,245,265,350,240,265,400,230,270,440,230,258,480,215,258,530,160,240,590,150,240,650,165,248,685,185],
  [265,60,125,300,110,155,338,165,185], [180,145,140,230,180,175,290,220,200,312,240,215], [278,300,240,200,312,180,150,340,140,60,320,125],
  [215,265,150,262,302,210], [270,440,225,340,455,185,380,490,150,395,540,125], [258,480,210,200,490,165,150,520,130], [72,240,95,80,320,130], [100,330,120,90,400,100],
  [248,685,180,300,705,150,400,700,145,440,690,125], [520,735,145,570,790,110,620,850,85,660,920,75], [140,650,105,200,680,145,248,685,180],
  [300,705,145,310,780,110], [350,705,140,360,790,100], [400,705,140,420,790,90], [460,720,120,480,800,85],
  [660,30,215,600,60,175,595,110,165,590,150,170,560,195,200,560,240,190,600,310,165,635,370,145,640,410,135,610,445,120],
  [640,410,130,700,435,108,765,465,118,830,510,100,870,545,98,870,590,72], [555,220,190,480,215,155,440,250,175,385,235,175],
  [440,250,165,440,330,130,450,370,100], [460,150,125,480,210,150], [660,30,215,720,100,150,790,120,110], [590,180,170,680,210,130,740,250,110],
  [800,280,85,860,290,95,920,295,105,1000,310,65], [870,290,95,880,350,72], [500,270,125,515,390,105], [540,50,120,600,60,170], [880,50,110,940,50,100,1000,60,70], [960,60,85,980,120,65], [1190,60,45,1190,150,36],
  [1100,290,56,1140,380,58,1140,520,46,1120,570,38], [1060,400,58,1040,480,52], [1340,330,34,1350,440,32],
  [60,720,110,100,740,130,150,760,145,155,850,145,160,920,160,145,990,210], [30,910,125,60,950,145,145,990,205],
  [145,990,205,220,1005,155,300,1010,128,380,1010,128,440,1030,125,490,1030,120,540,1080,98,600,1100,78], [270,1000,128,270,940,108,290,910,92], [340,1000,118,360,940,110,390,900,90], [310,1010,125,350,1080,104], [390,1010,120,410,1090,98], [470,1030,115,500,1100,88],
  [145,990,195,90,1080,145,60,1130,125], [150,1000,195,165,1080,150,190,1150,130,200,1210,160,185,1290,155,190,1330,150,250,1390,138,270,1430,124,340,1490,95],
  [200,1210,160,300,1215,132,350,1215,118,430,1260,98,520,1280,82], [200,1210,150,130,1230,125,50,1250,105], [190,1330,140,110,1350,130,100,1420,115,40,1450,100], [240,1500,105,250,1430,120], [300,870,90,240,880,105,170,900,145],
  [1549,800,145,1480,890,145,1470,940,155,1430,1030,180,1380,1070,165,1310,1120,195,1240,1155,172,1190,1200,192,1170,1260,188,1155,1310,192,1145,1380,198,1110,1420,168,1070,1480,152,1055,1537,168],
  [1480,890,140,1400,850,95], [1190,1190,180,1110,1150,115,1080,1100,80], [1310,1120,185,1340,1180,150,1380,1230,110,1440,1250,96], [1155,1360,175,1270,1380,122], [1170,1250,165,1060,1230,80,1010,1210,58], [1430,1040,165,1460,1090,130,1480,1150,105],
  [1240,890,80,1190,940,130,1210,970,120,1280,1020,95], [1190,940,120,1100,980,60], [1200,980,110,1180,910,90,1090,890,58], [810,1160,62,840,1215,98,870,1200,82,920,1180,88], [850,860,44,780,970,40], [880,860,42,820,960,36]
]
const lows = [
  [1290,40,5,1290,150,16,1270,280,18,1230,400,22,1270,520,18,1180,560,18,1110,630,17,1060,700,17,980,800,17,930,880,17,870,960,17,820,1040,17,720,1035,18,670,1030,16,655,1100,14,625,1170,12,580,1220,10,580,1300,10,580,1400,10,560,1440,10,500,1480,8,520,1535,5],
  [1340,620,20,1250,620,18,1180,660,18,1120,690,18,1040,770,18,960,850,18], [1090,590,18,1070,680,18,990,760,18,880,810,18,800,815,20,740,825,18,720,900,18,700,980,16,680,1030,16],
  [430,40,65,410,120,68,390,180,74,365,225,82,380,270,76,400,330,70,430,390,66,500,450,58,525,500,48,560,560,35,580,605,28,640,660,22,700,710,18,730,770,18,740,820,18,780,790,24],
  [280,605,92,360,615,75,440,600,68,520,595,54,580,605,30], [205,740,60,230,800,38,260,825,30,340,845,27,420,865,22,480,870,20,520,900,17,560,960,16,620,1010,14,665,1040,13],
  [290,1060,100,340,1100,70,400,1150,40,480,1170,30,540,1200,16,580,1220,10], [260,1290,105,340,1350,60,400,1365,45,450,1375,30,510,1405,16,560,1430,10],
  [780,360,66,860,425,50,960,480,36,1020,530,26,1070,570,18], [820,180,74,880,205,55,990,205,40,1050,175,32,1120,205,27,1200,195,23,1260,180,18], [1340,80,10,1340,150,14,1400,260,18,1410,330,18,1390,430,20,1360,520,20,1300,590,18],
  [1200,720,22,1250,760,25,1300,820,32,1315,900,42,1335,990,62], [820,1040,17,900,1045,19,970,1065,24,1060,1020,38,1150,1035,62,1190,1110,82], [1330,1280,100,1390,1370,65,1460,1430,50,1549,1470,42],
  [30,40,22,80,60,26,140,60,45,200,100,58,250,140,82], [30,140,28,70,150,32,110,200,45,150,210,65], [170,205,70,230,240,98], [110,260,62,150,300,85], [50,500,60,100,430,75,160,425,95], [30,570,48,110,580,65,160,590,88], [30,650,62,130,700,80], [30,200,35,30,420,75],
  [30,1530,25,140,1520,22,180,1440,62], [30,1310,80,100,1300,92], [80,1150,92,30,1210,85], [700,1160,22,760,1300,20,720,1420,17,700,1530,16], [850,1270,26,850,1350,24,820,1500,20,900,1530,26], [850,1410,19,930,1390,26], [980,1280,38,960,1360,38,960,1480,44], [640,1340,40,700,1360,24], [650,1230,45,640,1260,42], [420,1530,58,440,1440,64], [600,1490,38,610,1530,38],
  [780,1100,22,720,1180,26], [970,1150,30,1000,1180,42], [1060,1120,44,1040,1170,54], [1000,950,34,1080,900,50,1150,830,50,1160,750,35], [950,1000,28,1040,980,40],
  [1380,70,15,1500,60,18], [1400,150,11,1549,145,10], [1450,250,22,1540,260,24], [1480,350,26,1520,470,28], [1440,550,26,1440,640,28], [1530,600,32,1500,700,40], [1400,700,36,1420,780,54], [1320,720,28], [1549,950,98,1549,1100,72], [1549,1300,55,1480,1200,80], [1500,1520,68,1400,1480,80,1300,1500,90,1200,1490,95], [1290,1290,118,1350,1400,92], [1060,1350,68,1010,1450,62],
  /* slopes */
  [650,140,112,760,190,96,900,260,66], [700,300,102,760,380,92,880,470,70,980,560,48], [700,520,78,800,600,62,950,650,44], [640,560,70,720,640,50,800,720,40], [560,440,95,590,520,82], [330,540,105,450,540,90], [460,640,78,540,680,84,620,740,75,670,850,62], [420,460,90,460,500,80], [1040,90,58,1060,140,50], [860,120,78,900,160,62], [480,80,75,520,120,80], [340,370,130,370,420,105], [180,400,120,220,430,140], [640,950,70,650,990,55], [480,940,56,540,1010,45,580,1080,62], [560,1150,44,500,1120,64], [480,1220,62,540,1300,55], [380,1290,82,470,1330,68], [380,1440,76,440,1480,56],
  [330,960,75,430,950,64], [200,1060,115,250,1100,100], [420,1210,76,350,1170,78], [100,850,92,60,830,85], [200,850,75], [150,240,65], [520,330,95,480,300,100], [580,360,110], [1200,620,20,1260,480,22], [1000,400,52,960,360,56], [1000,250,48,1180,260,34], [1180,440,30]
]

const dem = ref(null)

function densify(lines, step) {
  const out = []
  for (const l of lines) {
    for (let i = 0; i < l.length; i += 3) {
      out.push([l[i], l[i + 1], l[i + 2]])
      if (i + 5 < l.length) {
        const dx = l[i + 3] - l[i], dy = l[i + 4] - l[i + 1], n = Math.round(Math.hypot(dx, dy) / step)
        for (let k = 1; k < n; k++) out.push([l[i] + dx * k / n, l[i + 1] + dy * k / n, l[i + 2] + (l[i + 5] - l[i + 2]) * k / n])
      }
    }
  }
  return out
}

function drawElevation(cv) {
  const W = cv.width, H = cv.height
  const hash = (x, y) => {
    let n = Math.imul(x, 374761393) + Math.imul(y, 668265263) | 0
    n = Math.imul(n ^ (n >>> 13), 1274126177)
    return ((n ^ (n >>> 16)) >>> 0) / 4294967295
  }
  const noise = (x, y) => {
    const xi = Math.floor(x), yi = Math.floor(y)
    let u = x - xi, v = y - yi
    u = u * u * (3 - 2 * u); v = v * v * (3 - 2 * v)
    return (hash(xi, yi) * (1 - u) + hash(xi + 1, yi) * u) * (1 - v) + (hash(xi, yi + 1) * (1 - u) + hash(xi + 1, yi + 1) * u) * v
  }
  const fbm = (x, y) => noise(x, y) * .55 + noise(x * 2.1 + 9, y * 2.1) * .28 + noise(x * 4.3, y * 4.3 + 5) * .17 - .5

  /* spurs leaving each crest alternately left and right */
  const spurs = []
  ridges.forEach((l, li) => {
    for (let i = 0; i + 5 < l.length; i += 3) {
      const dx = l[i + 3] - l[i], dy = l[i + 4] - l[i + 1], len = Math.hypot(dx, dy)
      const n = Math.max(1, Math.round(len / 22))
      for (let k = 0; k < n; k++) {
        const f = (k + .3 + hash(li, i + k) * .4) / n, v = l[i + 2] + (l[i + 5] - l[i + 2]) * f
        const side = (k + i / 3) % 2 ? 1 : -1
        const a = Math.atan2(dy, dx) + side * (.9 + hash(k + 7, li * 31 + i) * .6)
        const r = 22 + v * .34 * (.5 + hash(li + 3, i * 5 + k))
        const x0 = l[i] + dx * f, y0 = l[i + 1] + dy * f
        const b = a - side * .35
        spurs.push([x0, y0, v * .9, x0 + Math.cos(a) * r * .5, y0 + Math.sin(a) * r * .5, v * .64, x0 + Math.cos(a) * r * .5 + Math.cos(b) * r * .6, y0 + Math.sin(a) * r * .5 + Math.sin(b) * r * .6, v * .2])
      }
    }
  })

  /* crest glow, splatted into its own buffer */
  const glow = new Float32Array(W * H), sx = W / 1525, sy = H / 1510
  const splat = (list, gain, fall) => {
    for (const p of list) {
      const cx = (p[0] - 24) * sx, cy = (p[1] - 27) * sy, R = 32
      for (let y = Math.max(0, Math.floor(cy - R)); y < Math.min(H, cy + R); y++) {
        for (let x = Math.max(0, Math.floor(cx - R)); x < Math.min(W, cx + R); x++) {
          const d = Math.hypot(x - cx, y - cy) / sx, g = p[2] * gain * (Math.exp(-Math.sqrt(d * d + 36) / fall) - .025)
          if (g > glow[y * W + x]) glow[y * W + x] = g
        }
      }
    }
  }
  splat(densify(ridges, 5), 1.05, 31)
  splat(densify(spurs, 6), .84, 17)
  const sample = (x, y) => {
    const u = Math.max(0, Math.min(W - 1.01, (x - 24) * sx)), v = Math.max(0, Math.min(H - 1.01, (y - 27) * sy))
    const a = u | 0, b = v | 0, fu = u - a, fv = v - b, o = b * W + a
    return (glow[o] * (1 - fu) + glow[o + 1] * fu) * (1 - fv) + (glow[o + W] * (1 - fu) + glow[o + W + 1] * fu) * fv
  }

  const pts = densify(ridges, 10).map((p) => [p[0], p[1], p[2] * (p[2] > 70 ? .7 : .85)]).concat(densify(lows, 10))
  const N = pts.length, px = new Float64Array(N), py = new Float64Array(N), pv = new Float64Array(N)
  pts.forEach((p, i) => { px[i] = p[0]; py[i] = p[1]; pv[i] = p[2] })

  const ctx = cv.getContext('2d'), img = ctx.createImageData(W, H)
  for (let j = 0; j < H; j++) {
    for (let i = 0; i < W; i++) {
      const gx = 24 + (i + .5) / sx, gy = 27 + (j + .5) / sy
      const x = gx + fbm(gx / 34, gy / 34) * 24, y = gy + fbm(gx / 34 + 40, gy / 34 + 17) * 24
      let s = 0, t = 0
      for (let k = 0; k < N; k++) {
        /* inverse square near a line, inverse fourth power beyond ~60 units */
        const dx = px[k] - x, dy = py[k] - y, d = dx * dx + dy * dy + 16, w = 1 / (d * (1 + d / 3600))
        s += w; t += w * pv[k]
      }
      const base = t / s
      const v = base * (1 + .16 * fbm(gx / 22 + 5, gy / 40)) + sample(x, y) * .38 * Math.min(1, base / 60)
      const o = (j * W + i) * 4
      img.data[o] = img.data[o + 1] = img.data[o + 2] = Math.max(2, Math.min(248, v))
      img.data[o + 3] = 255
    }
  }
  ctx.putImageData(img, 0, 0)
}
onMounted(() => drawElevation(dem.value))
</script>

<template>
  <div class="desk">
    <div class="win">
      <header class="title">
        <svg class="logo" width="20" height="20" viewBox="0 0 20 20">
          <circle cx="9.500" cy="9.500" r="7" fill="none" stroke="#8aac3f" stroke-width="3.600" />
          <path d="M11 11l7 7" stroke="#6d9632" stroke-width="4" /><path d="M9.500 6.500L13 10l-3.500 3L6.500 9.500z" fill="#f09a3a" />
        </svg>
        <Txt t="*Untitled Project - QGIS" :w="142.500" />
        <span class="fill"></span>
        <svg class="wbtn" width="130" height="20" viewBox="0 0 130 20" fill="none" stroke="#111" stroke-width="1.200">
          <path d="M5.500 10.500H17" /><rect x="57.500" y="4.500" width="11" height="11" /><path d="M109.500 4.500l11.500 11.500M121 4.500L109.500 16" />
        </svg>
      </header>
      <nav class="menu"><Txt v-for="m in menus" :key="m[0]" :t="m[0]" :w="m[1]" /></nav>

      <div v-for="(bar, bi) in bars" :key="bi" class="bar">
        <div v-for="(g, gi) in bar" :key="gi" class="group" :class="{ last: !g.w, first: !gi }" :style="g.w ? { width: g.w + 'px' } : null">
          <span class="grip"></span>
          <template v-for="(n, ni) in g.t" :key="ni">
            <span v-if="n === '^'" class="drop" :class="{ dim: !dark.has(g.t[ni - 1]) }"></span>
            <span v-else class="tool" :class="{ on: n === 'hand' }"><svg width="28" height="28" viewBox="0 0 28 28" v-html="I[n]"></svg></span>
          </template>
        </div>
      </div>

      <main class="body">
        <aside class="side">
          <section class="dock">
            <div class="head"><Txt t="Browser" :w="48" /><span class="fill"></span>
              <svg width="17" height="17" viewBox="0 0 28 28" v-html="I.float"></svg><svg class="x" width="16" height="16" viewBox="0 0 28 28" v-html="I.close"></svg></div>
            <div class="tools"><span v-for="n in ['addl', 'refresh', 'filter', 'coll', 'info']" :key="n" class="st"><svg width="18" height="18" viewBox="0 0 28 28" v-html="I[n]"></svg></span></div>
            <div class="tree">
              <div class="view">
                <div class="rows">
                  <div v-for="(r, i) in browserRows" :key="i" class="row">
                    <svg class="chev" width="8" height="10" viewBox="0 0 8 10"><path v-if="r[3]" d="M1.500 1l4.500 4-4.500 4" fill="none" stroke="#999" stroke-width="1.500" /></svg>
                    <svg class="ri" width="18" height="18" viewBox="0 0 28 28" v-html="I[r[0]]"></svg>
                    <Txt v-if="r[1]" :t="r[1]" :w="r[2]" />
                  </div>
                </div>
                <div class="vbar">
                  <svg width="10" height="7" viewBox="0 0 10 7"><path d="M1 6l4-4 4 4" /></svg><i></i><span class="fill"></span>
                  <svg width="10" height="7" viewBox="0 0 10 7"><path d="M1 1l4 4 4-4" /></svg>
                </div>
              </div>
              <div class="hbar">
                <svg width="7" height="10" viewBox="0 0 7 10"><path d="M6 1L2 5l4 4" /></svg><i></i><span class="fill"></span>
                <svg width="7" height="10" viewBox="0 0 7 10"><path d="M1 1l4 4-4 4" /></svg>
              </div>
            </div>
          </section>
          <section class="dock grow">
            <div class="head"><Txt t="Layers" :w="38" /><span class="fill"></span>
              <svg width="17" height="17" viewBox="0 0 28 28" v-html="I.float"></svg><svg class="x" width="16" height="16" viewBox="0 0 28 28" v-html="I.close"></svg></div>
            <div class="tools">
              <template v-for="n in ['brush', 'grp', 'eye', 'filter', 'eps', '^', 'expa', 'coll', 'rem']" :key="n">
                <span v-if="n === '^'" class="drop dim"></span>
                <span v-else class="st"><svg width="18" height="18" viewBox="0 0 28 28" v-html="I[n]"></svg></span>
              </template>
            </div>
            <div class="tree layers">
              <div class="lrow sel">
                <svg class="lchev" width="12" height="8" viewBox="0 0 12 8"><path d="M1.500 1.500l4.500 4.500 4.500-4.500" fill="none" stroke="#333" stroke-width="1.700" /></svg>
                <div class="hl">
                  <svg class="chk" width="16" height="16" viewBox="0 0 16 16"><rect x=".8" y=".8" width="14.400" height="14.400" fill="#fff" stroke="#333" stroke-width="1.200" /><path d="M3.500 8l3.200 3.200L13 4.500" fill="none" stroke="#333" stroke-width="1.400" /></svg>
                  <svg width="17" height="17" viewBox="0 0 28 28" v-html="I.ras"></svg>
                  <Txt class="el" t="elevation" :w="59.500" :b="true" :u="true" />
                </div>
              </div>
              <div class="lrow"><span class="sw blk"></span><Txt t="134.525" :w="44.500" /></div>
              <div class="lrow"><span class="sw"></span><Txt t="1333.91" :w="43.500" /></div>
            </div>
          </section>
        </aside>
        <section class="canvas"><canvas ref="dem" width="415" height="405"></canvas></section>
      </main>

      <footer class="status">
        <div class="field search">
          <svg width="15" height="15" viewBox="0 0 15 15" fill="none" stroke="#8a8a8a" stroke-width="1.300"><circle cx="6" cy="6" r="4.700" /><path d="M9.500 9.500l4.500 4.500" /></svg>
          <Txt t="Type to locate (Ctrl+K)" :w="127" :s="12.500" c="#7b7b7b" :f="tahoma" />
        </div>
        <Txt class="ready" t="Ready" :w="36" :s="12.500" :f="tahoma" />
        <span class="fill"></span>
        <Txt t="Coordinate" :w="60.500" :s="12.500" :f="tahoma" />
        <div class="field co"><Txt t="490011,215519" :w="87" :s="12.500" :f="tahoma" /></div>
        <svg class="mouse" width="19" height="19" viewBox="0 0 19 19" fill="none" stroke="#333" stroke-width="1.500">
          <path d="M2 4c2-4 6-3 8 1l4 7c1 4-3 6-6 4S1 8 2 4zM4 3l5 7M2 8l7-5M6 13l6-5" /><circle cx="12" cy="13" r="3.500" fill="#eee" /><path d="M11 5l4-2M15 7l3-4M13 12l2 2" />
        </svg>
        <Txt class="scale" t="Scale" :w="28.500" :s="12.500" :f="tahoma" />
        <div class="field sc"><Txt t="1:164835" :w="52" :s="12.500" :f="tahoma" /><span class="fill"></span><svg width="11" height="7" viewBox="0 0 11 7"><path d="M1 1l4.500 4.500L10 1" fill="none" stroke="#555" stroke-width="1.200" /></svg></div>
        <svg class="lock" width="14" height="18" viewBox="0 0 14 18"><path d="M3 9V5.500C3 .5 11 .5 11 5.500V9" fill="none" stroke="#a5a5a5" stroke-width="2.200" /><rect x=".5" y="8" width="13" height="9.500" rx="1" fill="#5f5f5f" /></svg>
        <Txt t="Magnifier" :w="50" :s="12.500" :f="tahoma" />
        <div class="field mag"><Txt t="100%" :w="32" :s="12.500" :f="tahoma" /><span class="fill"></span><span class="spin"><b></b><b class="d"></b></span></div>
        <Txt class="rotl" t="Rotation" :w="47" :s="12.500" :f="tahoma" />
        <div class="field rot"><Txt t="0.0 °" :w="28.500" :s="12.500" :f="tahoma" /><span class="fill"></span><span class="spin"><b></b><b class="d"></b></span></div>
        <svg class="chk2" width="16" height="16" viewBox="0 0 16 16"><rect x=".8" y=".8" width="14" height="14" fill="#fff" stroke="#333" stroke-width="1.200" /><path d="M3.500 8l3.200 3.200L12.500 4.500" fill="none" stroke="#333" stroke-width="1.400" /></svg>
        <Txt class="rend" t="Render" :w="40" :s="12.500" :f="tahoma" />
        <svg class="gl" width="18" height="18" viewBox="0 0 28 28" v-html="I.q5"></svg>
        <Txt t="EPSG:2852" :w="61.500" :s="12.500" :f="tahoma" />
        <svg class="msg" width="19" height="18" viewBox="0 0 19 18"><path d="M9.500 1C15 1 18.500 3.500 18.500 7.500c0 2.500-1 4-3 5.200l1.500 4.300-4.500-3C6 15 .5 13 .5 7.500.500 3.500 4 1 9.500 1z" fill="#555" /><path d="M4.500 7.500h2M8.500 7.500h2M12.500 7.500h2" stroke="#fff" stroke-width="2" /></svg>
        <svg class="size" width="10" height="10" viewBox="0 0 10 10" fill="#b5b5b5"><path d="M8 0h2v2H8zM4 4h2v2H4zM8 4h2v2H8zM0 8h2v2H0zM4 8h2v2H4zM8 8h2v2H8z" /></svg>
      </footer>
    </div>
  </div>
</template>

<style>
body { background: #fff; overflow: hidden; }
</style>

<style scoped>
.desk { width: 1574px; height: 956px; padding: 22px 42px 40px 24px; box-sizing: border-box; background: #fff; font-family: "Open Sans", sans-serif; }
.win { width: 1508px; height: 894px; box-sizing: border-box; border: 1px solid #6b6b6b; background: #f0f0f0; display: flex; flex-direction: column; }
.fill { flex: 1; }
.title { height: 34px; flex: none; background: #fff; display: flex; align-items: center; padding-left: 8.500px; }
.title .logo { margin: -1px 4.500px 0 0; }
.title .wbtn { margin: -1px 12px 0 0; }
.menu { height: 24px; flex: none; box-sizing: border-box; background: #fff; display: flex; align-items: center; gap: 18.350px; padding: 1.500px 0 0 9.800px; }
.bar { height: 39px; flex: none; box-sizing: border-box; display: flex; border-top: 1px solid #fff; border-bottom: 1px solid #adadad; }
.group { height: 37px; box-sizing: border-box; flex: none; display: flex; align-items: center; padding-left: 4px; border-left: 1px solid #fff; border-right: 1px solid #adadad; }
.group.first { border-left: 0; padding-left: 4.500px; }
.group.last { flex: 1; border-right: 0; }
.grip { width: 3px; height: 30px; flex: none; margin-right: 3.600px; background: radial-gradient(circle at 1.500px 1.500px, #a4a4a4 1px, transparent 1.300px) 0 0 / 3px 4.700px; }
.tool { width: 35.450px; height: 33px; flex: none; display: flex; align-items: center; justify-content: center; box-sizing: border-box; }
.tool.on { background: #c5dcf2; border: 1px solid #99c8f0; }
.drop { width: 13.800px; flex: none; height: 5px; background: #1e1e1e; clip-path: polygon(20% 0, 80% 0, 50% 100%); }
.drop.dim { background: #666; }
.body { flex: 1; min-height: 0; display: flex; padding-top: 1px; }
.side { width: 236px; flex: none; display: flex; flex-direction: column; padding-top: 2px; gap: 7px; }
.dock { height: 293px; display: flex; flex-direction: column; }
.dock.grow { height: auto; flex: 1; min-height: 0; }
.head { height: 28px; box-sizing: border-box; flex: none; background: #dadada; border: 1px solid #bcbcbc; display: flex; align-items: center; padding: 0 5px 0 5px; }
.head .x { margin-left: 7px; }
.tools { height: 32.500px; flex: none; display: flex; align-items: center; padding: 0 0 0 1.600px; box-sizing: border-box; }
.st { width: 26.400px; display: flex; justify-content: center; flex: none; }
.tree { flex: 1; min-height: 0; box-sizing: border-box; border: 1px solid #828790; background: #fff; display: flex; flex-direction: column; }
.view { flex: 1; min-height: 0; display: flex; }
.rows { flex: 1; overflow: hidden; padding-top: .5px; }
.row { height: 22.900px; display: flex; align-items: center; }
.chev { margin: 0 11px 0 7.500px; flex: none; }
.ri { margin-right: 7px; flex: none; }
.vbar { width: 18px; background: #f0f0f0; display: flex; flex-direction: column; align-items: center; padding: 6.500px 0 7px; box-sizing: border-box; }
.vbar i { width: 17px; height: 29px; background: #cdcdcd; margin-top: 5px; }
.vbar path, .hbar path { fill: none; stroke: #444; stroke-width: 1.800; }
.hbar { height: 19px; flex: none; background: #f0f0f0; display: flex; align-items: center; padding: 0 25px 0 6px; }
.hbar i { width: 136px; height: 17px; background: #cdcdcd; margin-left: 7px; }
.lrow { height: 23px; display: flex; align-items: center; flex: none; }
.lchev { margin: 0 7px 0 5px; flex: none; }
.hl { flex: 1; height: 23px; display: flex; align-items: center; background: #d9d9d9; padding-left: 2px; }
.hl .chk { margin-right: 7.500px; }
.el { margin-left: 6.500px; }
.sw { width: 19px; height: 19px; margin: 0 6.500px 0 49.500px; flex: none; }
.blk { background: #000; }
.canvas { flex: 1; margin-left: 5px; box-sizing: border-box; border: 1px solid #828790; background: #fff; padding: 18.500px 0 0 322.300px; }
.canvas canvas { display: block; width: 623px; height: 607px; clip-path: polygon(1px 0, 26px 0, 26px 1px, 95px 1px, 95px 0, 297px 0, 297px 1px, 415px 1px, 415px 0, 623px 0, 623px 606px, 465px 606px, 465px 607px, 345px 607px, 345px 606px, 90px 606px, 90px 605px, 0 605px, 0 550px, 1px 550px, 1px 500px, 0 500px, 0 440px, 1px 440px, 1px 280px, 0 280px, 0 200px, 1px 200px, 1px 98px, 2px 98px, 2px 53px, 1px 53px); }
.status { height: 31px; flex: none; display: flex; align-items: center; padding: 3px 4px 0 5px; box-sizing: border-box; }
.field { height: 23px; box-sizing: border-box; border: 1px solid #7a7a7a; background: #fff; display: flex; align-items: center; flex: none; }
.search { width: 229px; padding-left: 9px; gap: 7px; }
.ready { margin-left: 8px; }
.co { width: 99px; margin-left: 4.500px; padding-left: 4px; }
.mouse { margin: 0 14px 0 2.500px; }
.sc { width: 90px; margin-left: 4px; padding: 0 5px; }
.lock { margin: 0 9px 0 12px; }
.mag { width: 94px; margin-left: 5px; padding: 0 1px 0 3px; }
.rotl { margin-left: 9.500px; }
.rot { width: 92px; margin-left: 11px; padding: 0 1px 0 2px; }
.spin { width: 15px; height: 19px; box-sizing: border-box; border: 1px solid #aaa; background: linear-gradient(#f0f0f0 8px, #aaa 8px, #aaa 9px, #f0f0f0 9px); display: flex; flex-direction: column; justify-content: space-between; align-items: center; padding: 2px 0; }
.spin b { width: 7px; height: 4px; background: #111; clip-path: polygon(50% 0, 100% 100%, 0 100%); }
.spin b.d { clip-path: polygon(0 0, 100% 0, 50% 100%); }
.chk2 { margin: -2px 0 0 6.500px; }
.rend { margin: -2px 0 0 4px; }
.gl { margin: -2px 4px 0 20.500px; }
.msg { margin: -2px 16px 0 18.500px; }
.size { align-self: flex-end; margin-bottom: 3px; }
</style>
